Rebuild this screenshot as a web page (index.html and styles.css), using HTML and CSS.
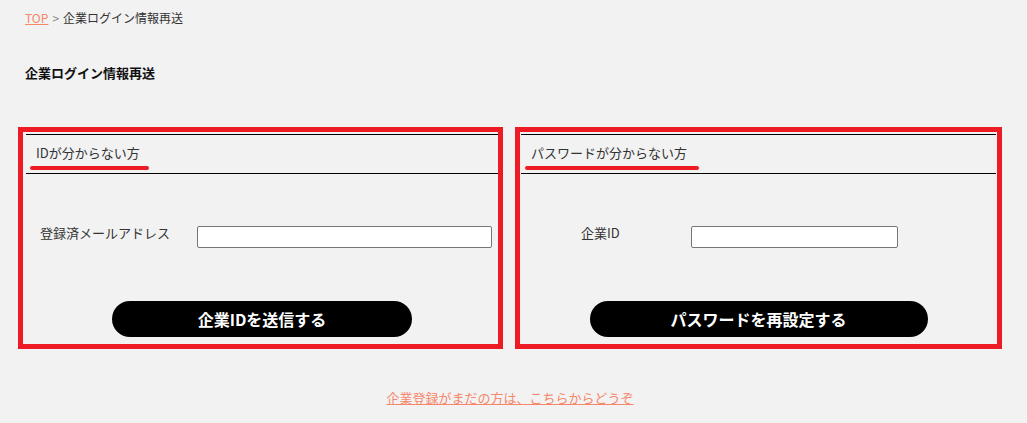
FILE: index.html
```html
<!DOCTYPE html>
<html lang="ja">
<head>
<meta charset="utf-8">
<title>企業ログイン情報再送</title>
<link rel="stylesheet" href="styles.css">
</head>
<body>
<div class="page">
  <nav class="breadcrumb"><a href="#" class="crumb-link">TOP</a><span class="sep">&gt;</span><span class="crumb-current">企業ログイン情報再送</span></nav>
  <h1 class="page-title">企業ログイン情報再送</h1>
  <div class="panels">
    <section class="panel panel-left">
      <div class="panel-head"><h2 class="panel-title panel-title-left">IDが分からない方</h2></div>
      <div class="form-row row-left">
        <label class="field-label label-left">登録済メールアドレス</label>
        <input type="text" class="field-input input-left">
      </div>
      <div class="btn-wrap"><button class="btn btn-left">企業IDを送信する</button></div>
    </section>
    <section class="panel panel-right">
      <div class="panel-head"><h2 class="panel-title panel-title-right">パスワードが分からない方</h2></div>
      <div class="form-row row-right">
        <label class="field-label label-right">企業ID</label>
        <input type="text" class="field-input input-right">
      </div>
      <div class="btn-wrap"><button class="btn btn-right">パスワードを再設定する</button></div>
    </section>
  </div>
  <p class="register"><a href="#" class="register-link">企業登録がまだの方は、こちらからどうぞ</a></p>
</div>
</body>
</html>
```

FILE: styles.css
```css
* { box-sizing: border-box; }
html, body { margin: 0; padding: 0; }
body {
  background: #f2f2f2;
  font-family: "Noto Sans CJK JP", "Noto Sans", sans-serif;
  color: #222;
}
.page {
  width: 984px;
  margin-left: 18px;
}
.breadcrumb {
  padding: 8px 0 0 7px;
  font-size: 12px;
  line-height: 20px;
  color: #333;
}
.crumb-link {
  color: #f7876a;
  text-decoration: underline;
}
.sep {
  color: #888;
  margin: 0 4px;
}
.page-title {
  margin: 0;
  padding: 35px 0 0 7px;
  font-size: 13px;
  line-height: 20px;
  font-weight: bold;
  color: #111;
}
.panels {
  display: flex;
  gap: 12px;
  margin-top: 44px;
}
.panel {
  height: 222px;
  border: 5px solid #ed1c24;
  display: flex;
  flex-direction: column;
}
.panel-left { width: 485px; padding: 2px 0 0 3px; }
.panel-right { width: 487px; padding: 2px 1px 0 1px; }
.panel-head {
  display: flex;
  border-top: 1px solid #000;
  border-bottom: 1px solid #000;
  padding: 9px 0 3px 4px;
}
.panel-title {
  margin: 0;
  display: flex;
  flex-direction: column;
  font-size: 13px;
  line-height: 18px;
  font-weight: normal;
  color: #333;
  padding-left: 6px;
}
.panel-title::after {
  content: "";
  display: block;
  height: 4px;
  margin-top: 4px;
  margin-left: -6px;
  background: #ed1c24;
  border-radius: 2px;
}
.panel-title-left::after { margin-right: -9px; }
.panel-title-right::after { margin-right: -12px; }
.form-row {
  display: flex;
  align-items: flex-start;
  margin-top: 52px;
}
.row-left { padding-left: 14px; }
.row-right { padding-left: 60px; }
.field-label {
  font-size: 13px;
  line-height: 18px;
  margin-top: -2px;
  color: #333;
  letter-spacing: 0;
}
.label-left { width: 157px; }
.label-right { width: 110px; }
.field-input {
  height: 22px;
  border: 1px solid #767676;
  border-radius: 2px;
  background: #fff;
  padding: 0 4px;
  margin: 0;
  font-size: 13px;
}
.input-left { width: 295px; }
.input-right { width: 207px; }
.btn-wrap {
  display: flex;
  justify-content: center;
  margin-top: 53px;
}
.btn {
  height: 36px;
  border: none;
  border-radius: 18px;
  background: #000;
  color: #fff;
  font-family: "Noto Sans CJK JP", sans-serif;
  font-size: 16px;
  font-weight: bold;
  padding: 0;
  cursor: pointer;
}
.btn-left { width: 300px; }
.btn-right { width: 338px; }
.register {
  margin: 39px 0 0;
  text-align: center;
  font-size: 13px;
  line-height: 20px;
}
.register-link {
  color: #f7876a;
  text-decoration: underline;
}
```
